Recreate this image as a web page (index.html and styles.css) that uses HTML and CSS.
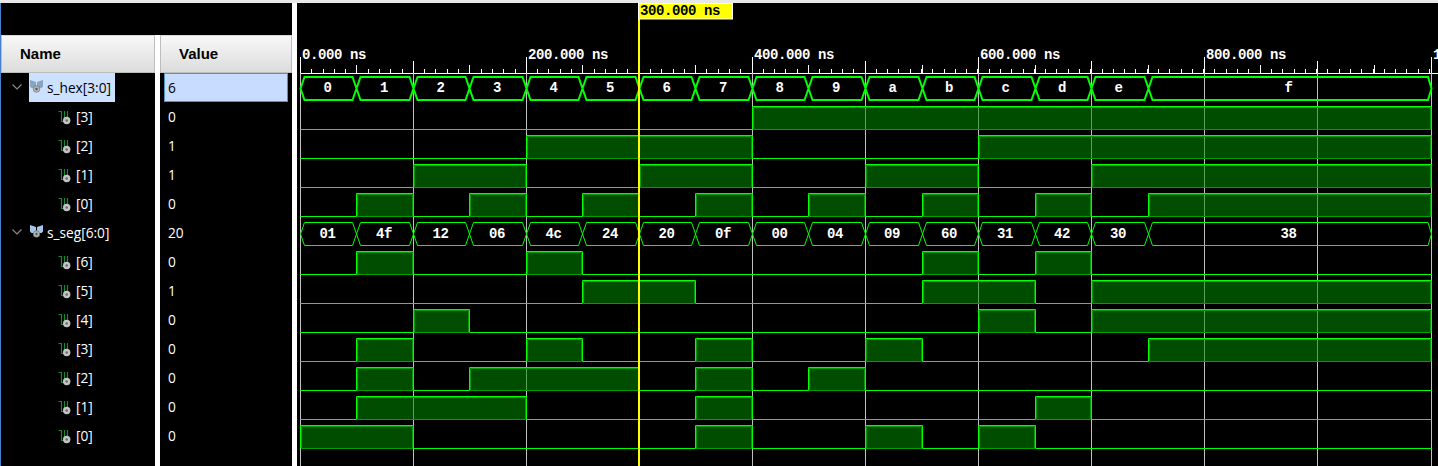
FILE: index.html
```html
<!DOCTYPE html>
<html lang="en">
<head>
    <meta charset="UTF-8">
    <title>Waveform</title>
    <link rel="stylesheet" href="styles.css">
</head>
<body>
    <svg class="icon-defs" width="0" height="0">
        <symbol id="bit-icon" viewBox="0 0 13 16">
            <path d="M0.5 2.5H3.5V12.5H6" fill="none" stroke="#17853a" stroke-width="1.2"/>
            <path d="M6.5 2V10M9.5 2V9" fill="none" stroke="#17853a" stroke-width="1.2"/>
            <circle cx="8.7" cy="11.5" r="3.7" fill="#c4c4c4"/>
            <circle cx="8.7" cy="11.5" r="1.3" fill="#6a6a6a"/>
        </symbol>
        <symbol id="bus-icon" viewBox="0 0 14 14">
            <path d="M0 1L6 3V9H1.5L0 7.5ZM13 1L7 3V9H11.5L13 7.5Z" fill="currentColor"/>
            <circle cx="6.5" cy="10" r="3.3" fill="#b5b5b5" stroke="#666" stroke-width=".6"/>
            <circle cx="6.5" cy="10" r="1.2" fill="#555"/>
        </symbol>
        <symbol id="chevron" viewBox="0 0 10 6">
            <path d="M0.5 0.5L5 5L9.5 0.5" fill="none" stroke="#8a8a8a" stroke-width="1.2"/>
        </symbol>
    </svg>

    <div class="window">
        <div class="tree-pane">
            <div class="pane-top"></div>
            <div class="columns">
                <div class="col-name">
                    <div class="col-head">Name</div>
                    <div class="row bus-row">
                        <svg class="chevron"><use href="#chevron"/></svg>
                        <span class="bus-label selected">
                            <svg class="bus-icon dim"><use href="#bus-icon"/></svg>s_hex[3:0]
                        </span>
                    </div>
                    <div class="row bit-row"><svg class="bit-icon"><use href="#bit-icon"/></svg>[3]</div>
                    <div class="row bit-row"><svg class="bit-icon"><use href="#bit-icon"/></svg>[2]</div>
                    <div class="row bit-row"><svg class="bit-icon"><use href="#bit-icon"/></svg>[1]</div>
                    <div class="row bit-row"><svg class="bit-icon"><use href="#bit-icon"/></svg>[0]</div>
                    <div class="row bus-row">
                        <svg class="chevron"><use href="#chevron"/></svg>
                        <span class="bus-label">
                            <svg class="bus-icon"><use href="#bus-icon"/></svg>s_seg[6:0]
                        </span>
                    </div>
                    <div class="row bit-row"><svg class="bit-icon"><use href="#bit-icon"/></svg>[6]</div>
                    <div class="row bit-row"><svg class="bit-icon"><use href="#bit-icon"/></svg>[5]</div>
                    <div class="row bit-row"><svg class="bit-icon"><use href="#bit-icon"/></svg>[4]</div>
                    <div class="row bit-row"><svg class="bit-icon"><use href="#bit-icon"/></svg>[3]</div>
                    <div class="row bit-row"><svg class="bit-icon"><use href="#bit-icon"/></svg>[2]</div>
                    <div class="row bit-row"><svg class="bit-icon"><use href="#bit-icon"/></svg>[1]</div>
                    <div class="row bit-row"><svg class="bit-icon"><use href="#bit-icon"/></svg>[0]</div>
                </div>
                <div class="col-value">
                    <div class="col-head">Value</div>
                    <div class="row val-row selected-val">6</div>
                    <div class="row val-row">0</div>
                    <div class="row val-row">1</div>
                    <div class="row val-row">1</div>
                    <div class="row val-row">0</div>
                    <div class="row val-row">20</div>
                    <div class="row val-row">0</div>
                    <div class="row val-row">1</div>
                    <div class="row val-row">0</div>
                    <div class="row val-row">0</div>
                    <div class="row val-row">0</div>
                    <div class="row val-row">0</div>
                    <div class="row val-row">0</div>
                </div>
            </div>
        </div>

        <svg class="wave" viewBox="297 3 1141 463" width="1141" height="463">
            <defs>
                <path id="bus-shape" d="M300.5 88.5l4-11.5H352.5l4 11.5-4 11.5H304.5ZM356.5 88.5l4-11.5H409.5l4 11.5-4 11.5H360.5ZM413.5 88.5l4-11.5H465.5l4 11.5-4 11.5H417.5ZM469.5 88.5l4-11.5H522.5l4 11.5-4 11.5H473.5ZM526.5 88.5l4-11.5H578.5l4 11.5-4 11.5H530.5ZM582.5 88.5l4-11.5H635.5l4 11.5-4 11.5H586.5ZM639.5 88.5l4-11.5H691.5l4 11.5-4 11.5H643.5ZM695.5 88.5l4-11.5H748.5l4 11.5-4 11.5H699.5ZM752.5 88.5l4-11.5H804.5l4 11.5-4 11.5H756.5ZM808.5 88.5l4-11.5H861.5l4 11.5-4 11.5H812.5ZM865.5 88.5l4-11.5H918.5l4 11.5-4 11.5H869.5ZM922.5 88.5l4-11.5H974.5l4 11.5-4 11.5H926.5ZM978.5 88.5l4-11.5H1031.5l4 11.5-4 11.5H982.5ZM1035.5 88.5l4-11.5H1087.5l4 11.5-4 11.5H1039.5ZM1091.5 88.5l4-11.5H1144.5l4 11.5-4 11.5H1095.5ZM1148.5 88.5l4-11.5H1428l3.5 11.5-3.5 11.5H1152.5Z"/>
            </defs>

            <!-- ruler -->
            <path class="ruler" d="M300 73.5H1438"/>
            <path class="ruler" d="M300.5 57V73M526.5 57V73M752.5 57V73M978.5 57V73M1204.5 57V73M1431.5 57V73"/>
            <path class="ruler" d="M413.5 61V73M639.5 61V73M865.5 61V73M1091.5 61V73M1317.5 61V73"/>
            <path class="ruler" d="M356.5 65V73M469.5 65V73M582.5 65V73M695.5 65V73M808.5 65V73M922.5 65V73M1035.5 65V73M1148.5 65V73M1260.5 65V73M1374.5 65V73"/>
            <line class="ruler-minor" x1="300" y1="71" x2="1432" y2="71"/>
            <text class="ruler-text" x="302" y="59">0.000 ns</text>
            <text class="ruler-text" x="528" y="59">200.000 ns</text>
            <text class="ruler-text" x="754" y="59">400.000 ns</text>
            <text class="ruler-text" x="980" y="59">600.000 ns</text>
            <text class="ruler-text" x="1206" y="59">800.000 ns</text>
            <text class="ruler-text" x="1433" y="59">1,000.000 ns</text>

            <!-- 100 ns grid -->
            <path class="grid" d="M300.5 73V466M413.5 73V466M526.5 73V466M639.5 73V466M752.5 73V466M865.5 73V466M978.5 73V466M1091.5 73V466M1204.5 73V466M1317.5 73V466M1431.5 73V466"/>

            <!-- s_hex -->
            <use class="bus-thick" href="#bus-shape"/>
            <g class="bus-text">
                <text x="327.5" y="92">0</text>
                <text x="384" y="92">1</text>
                <text x="440.5" y="92">2</text>
                <text x="497" y="92">3</text>
                <text x="553.5" y="92">4</text>
                <text x="610" y="92">5</text>
                <text x="666.5" y="92">6</text>
                <text x="723" y="92">7</text>
                <text x="779.5" y="92">8</text>
                <text x="836" y="92">9</text>
                <text x="892.5" y="92">a</text>
                <text x="949" y="92">b</text>
                <text x="1005.5" y="92">c</text>
                <text x="1062" y="92">d</text>
                <text x="1118.5" y="92">e</text>
                <text x="1288.5" y="92">f</text>
            </g>
            <path class="high" d="M753.5 107.5H1430.5V129.5H753.5Z"/>
            <path class="trace" d="M300.5 129.5H752.5V106.5H1431.5V129.5"/>
            <path class="high" d="M527.5 136.5H751.5V158.5H527.5ZM979.5 136.5H1430.5V158.5H979.5Z"/>
            <path class="trace" d="M300.5 158.5H526.5V135.5H752.5V158.5H978.5V135.5H1431.5V158.5"/>
            <path class="high" d="M414.5 165.5H525.5V187.5H414.5ZM640.5 165.5H751.5V187.5H640.5ZM866.5 165.5H977.5V187.5H866.5ZM1092.5 165.5H1430.5V187.5H1092.5Z"/>
            <path class="trace" d="M300.5 187.5H413.5V164.5H526.5V187.5H639.5V164.5H752.5V187.5H865.5V164.5H978.5V187.5H1091.5V164.5H1431.5V187.5"/>
            <path class="high" d="M357.5 194.5H412.5V216.5H357.5ZM470.5 194.5H525.5V216.5H470.5ZM583.5 194.5H638.5V216.5H583.5ZM696.5 194.5H751.5V216.5H696.5ZM809.5 194.5H864.5V216.5H809.5ZM923.5 194.5H977.5V216.5H923.5ZM1036.5 194.5H1090.5V216.5H1036.5ZM1149.5 194.5H1430.5V216.5H1149.5Z"/>
            <path class="trace" d="M300.5 216.5H356.5V193.5H413.5V216.5H469.5V193.5H526.5V216.5H582.5V193.5H639.5V216.5H695.5V193.5H752.5V216.5H808.5V193.5H865.5V216.5H922.5V193.5H978.5V216.5H1035.5V193.5H1091.5V216.5H1148.5V193.5H1431.5V216.5"/>

            <!-- s_seg -->
            <use class="bus-thin" href="#bus-shape" y="145.5"/>
            <g class="bus-text">
                <text x="327.5" y="237.5">01</text>
                <text x="384" y="237.5">4f</text>
                <text x="440.5" y="237.5">12</text>
                <text x="497" y="237.5">06</text>
                <text x="553.5" y="237.5">4c</text>
                <text x="610" y="237.5">24</text>
                <text x="666.5" y="237.5">20</text>
                <text x="723" y="237.5">0f</text>
                <text x="779.5" y="237.5">00</text>
                <text x="835" y="237.5">04</text>
                <text x="892" y="237.5">09</text>
                <text x="949" y="237.5">60</text>
                <text x="1005" y="237.5">31</text>
                <text x="1062" y="237.5">42</text>
                <text x="1118" y="237.5">30</text>
                <text x="1288.5" y="237.5">38</text>
            </g>
            <path class="high" d="M357.5 252.5H412.5V274.5H357.5ZM527.5 252.5H581.5V274.5H527.5ZM923.5 252.5H977.5V274.5H923.5ZM1036.5 252.5H1090.5V274.5H1036.5Z"/>
            <path class="trace" d="M300.5 274.5H356.5V251.5H413.5V274.5H526.5V251.5H582.5V274.5H922.5V251.5H978.5V274.5H1035.5V251.5H1091.5V274.5H1431.5"/>
            <path class="high" d="M583.5 281.5H694.5V303.5H583.5ZM923.5 281.5H1034.5V303.5H923.5ZM1092.5 281.5H1430.5V303.5H1092.5Z"/>
            <path class="trace" d="M300.5 303.5H582.5V280.5H695.5V303.5H922.5V280.5H1035.5V303.5H1091.5V280.5H1431.5V303.5"/>
            <path class="high" d="M414.5 310.5H468.5V332.5H414.5ZM979.5 310.5H1034.5V332.5H979.5ZM1092.5 310.5H1430.5V332.5H1092.5Z"/>
            <path class="trace" d="M300.5 332.5H413.5V309.5H469.5V332.5H978.5V309.5H1035.5V332.5H1091.5V309.5H1431.5V332.5"/>
            <path class="high" d="M357.5 339.5H412.5V361.5H357.5ZM527.5 339.5H581.5V361.5H527.5ZM696.5 339.5H751.5V361.5H696.5ZM866.5 339.5H921.5V361.5H866.5ZM1149.5 339.5H1430.5V361.5H1149.5Z"/>
            <path class="trace" d="M300.5 361.5H356.5V338.5H413.5V361.5H526.5V338.5H582.5V361.5H695.5V338.5H752.5V361.5H865.5V338.5H922.5V361.5H1148.5V338.5H1431.5V361.5"/>
            <path class="high" d="M357.5 368.5H412.5V390.5H357.5ZM470.5 368.5H638.5V390.5H470.5ZM696.5 368.5H751.5V390.5H696.5ZM809.5 368.5H864.5V390.5H809.5Z"/>
            <path class="trace" d="M300.5 390.5H356.5V367.5H413.5V390.5H469.5V367.5H639.5V390.5H695.5V367.5H752.5V390.5H808.5V367.5H865.5V390.5H1431.5"/>
            <path class="high" d="M357.5 397.5H525.5V419.5H357.5ZM696.5 397.5H751.5V419.5H696.5ZM1036.5 397.5H1090.5V419.5H1036.5Z"/>
            <path class="trace" d="M300.5 419.5H356.5V396.5H526.5V419.5H695.5V396.5H752.5V419.5H1035.5V396.5H1091.5V419.5H1431.5"/>
            <path class="high" d="M301.5 426.5H412.5V448.5H301.5ZM696.5 426.5H751.5V448.5H696.5ZM866.5 426.5H921.5V448.5H866.5ZM979.5 426.5H1034.5V448.5H979.5Z"/>
            <path class="trace" d="M300.5 448.5V425.5H413.5V448.5H695.5V425.5H752.5V448.5H865.5V425.5H922.5V448.5H978.5V425.5H1035.5V448.5H1431.5"/>

            <!-- cursor -->
            <path class="cursor" d="M639 3V466"/>
            <rect class="cursor-tag" x="638.5" y="3.5" width="94" height="15.5"/>
            <text class="cursor-text" x="640" y="15">300.000 ns</text>
        </svg>
    </div>
</body>
</html>
```

FILE: styles.css
```css
body {
    margin: 0;
    background-color: #e8e8e8;
    overflow: hidden;
    font-family: 'Open Sans', 'Liberation Sans', sans-serif;
    font-size: 13.7px;
    color: white;
}
.icon-defs {
    display: block;
    position: absolute;
}
.window {
    display: flex;
    height: 463px;
    margin-top: 3px;
    background-color: white;
    border-left: 1px solid #4a7fd0;
}
.tree-pane {
    width: 291px;
    display: flex;
    flex-direction: column;
}
.pane-top {
    height: 32px;
    background-color: black;
}
.columns {
    flex: 1;
    display: flex;
    gap: 5px;
}
.col-name {
    width: 154px;
    background-color: black;
}
.col-value {
    width: 132px;
    background-color: black;
}
.col-head {
    box-sizing: border-box;
    height: 38px;
    line-height: 36px;
    border: 1px solid #bdbdbd;
    border-top-color: #d8d8d8;
    background: linear-gradient(#f8f8f8, #dcdcdc);
    color: black;
    font-family: 'Liberation Sans', sans-serif;
    font-weight: bold;
    font-size: 15px;
}
.col-name .col-head {
    padding-left: 18px;
}
.col-value .col-head {
    padding-left: 18px;
}
.row {
    box-sizing: border-box;
    height: 29px;
    display: flex;
    align-items: center;
}
.bus-row {
    padding-left: 11px;
}
.chevron {
    width: 10px;
    height: 6px;
    margin-top: -2px;
}
.bus-label {
    display: flex;
    align-items: center;
    align-self: stretch;
    width: 85px;
    margin-left: 7px;
    padding-left: 1px;
}
.bus-label.selected {
    background-color: #cce0ff;
    color: black;
}
.bus-icon {
    width: 14px;
    height: 14px;
    margin-right: 3px;
    margin-top: -3px;
    color: #a3c6e8;
}
.bus-icon.dim {
    color: #86a6bf;
}
.bit-row {
    padding-left: 57px;
}
.bit-icon {
    width: 13px;
    height: 16px;
    margin-right: 5px;
}
.val-row {
    padding-left: 8px;
}
.selected-val {
    margin: 0 4px;
    padding-left: 3px;
    background-color: #c8dcff;
    border: 1px solid #4f93c8;
    color: black;
}
.wave {
    display: block;
    margin-left: 5px;
    background-color: black;
}
.ruler {
    fill: none;
    stroke: white;
}
.ruler-minor {
    stroke: white;
    stroke-width: 4;
    stroke-dasharray: 1 10.29;
    shape-rendering: crispEdges;
}
.ruler-text,
.cursor-text,
.bus-text text {
    font-family: 'Liberation Mono', monospace;
    font-weight: bold;
    font-size: 14px;
}
.ruler-text {
    fill: white;
    letter-spacing: -0.4px;
}
.bus-text text {
    fill: white;
    text-anchor: middle;
    letter-spacing: -0.4px;
}
.grid {
    fill: none;
    stroke: #c0c0c0;
}
.bus-thick {
    fill: none;
    stroke: #00ff00;
    stroke-width: 2;
}
.bus-thin {
    fill: none;
    stroke: #00ff00;
    stroke-width: 1;
}
.high {
    fill: rgba(0, 140, 0, 0.55);
    stroke: #00a000;
}
.trace {
    fill: none;
    stroke: #00ff00;
}
.cursor {
    fill: none;
    stroke: #ffff00;
    stroke-width: 2;
}
.cursor-tag {
    fill: #ffff00;
    stroke: white;
}
.cursor-text {
    fill: black;
    letter-spacing: -0.4px;
}
```
